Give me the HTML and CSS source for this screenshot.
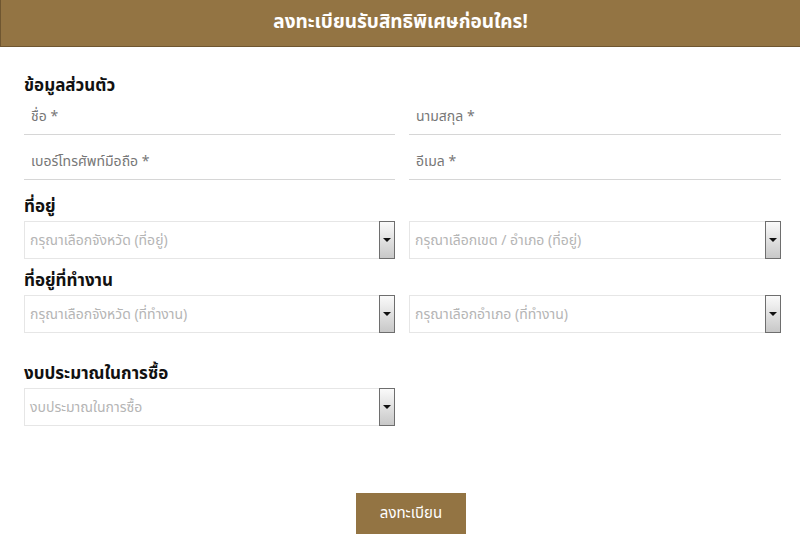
FILE: index.html
```html
<!DOCTYPE html>
<html lang="th">
<head>
<meta charset="utf-8">
<link rel="stylesheet" href="styles.css">
</head>
<body>
<header class="hero">ลงทะเบียนรับสิทธิพิเศษก่อนใคร!</header>
<form class="form">
  <h2 class="title t-personal">ข้อมูลส่วนตัว</h2>
  <div class="grid">
    <div class="field">ชื่อ *</div>
    <div class="field">นามสกุล *</div>
    <div class="field">เบอร์โทรศัพท์มือถือ *</div>
    <div class="field">อีเมล *</div>
  </div>
  <h2 class="title t-addr">ที่อยู่</h2>
  <div class="grid">
    <div class="select"><span class="ph">กรุณาเลือกจังหวัด (ที่อยู่)</span><span class="arrow"></span></div>
    <div class="select"><span class="ph">กรุณาเลือกเขต / อำเภอ (ที่อยู่)</span><span class="arrow"></span></div>
  </div>
  <h2 class="title t-work">ที่อยู่ที่ทำงาน</h2>
  <div class="grid">
    <div class="select"><span class="ph">กรุณาเลือกจังหวัด (ที่ทำงาน)</span><span class="arrow"></span></div>
    <div class="select"><span class="ph">กรุณาเลือกอำเภอ (ที่ทำงาน)</span><span class="arrow"></span></div>
  </div>
  <h2 class="title t-budget">งบประมาณในการซื้อ</h2>
  <div class="grid">
    <div class="select"><span class="ph">งบประมาณในการซื้อ</span><span class="arrow"></span></div>
  </div>
  <div class="actions"><button type="button" class="submit">ลงทะเบียน</button></div>
</form>
</body>
</html>
```
FILE: styles.css
```css
* { box-sizing: border-box; }
body {
  margin: 0;
  background: #fff;
  font-family: "Noto Sans", "Noto Sans Thai", sans-serif;
}
.hero {
  height: 47px;
  background: #937443;
  border-left: 1px solid #6f5630;
  border-bottom: 1px solid #6f5630;
  color: #fff;
  font-weight: 700;
  font-size: 19px;
  display: flex;
  align-items: center;
  justify-content: center;
  padding-bottom: 2px;
}
.form {
  padding: 0 19px 0 24px;
}
.title {
  margin: 0;
  font-size: 17px;
  font-weight: 700;
  color: #111;
  height: 20px;
  line-height: 20px;
}
.t-personal { margin-top: 28px; }
.t-addr { margin-top: 16px; }
.t-work { margin-top: 11px; }
.t-budget { margin-top: 30px; }
.grid {
  display: grid;
  grid-template-columns: 371px 372px;
  column-gap: 14px;
  row-gap: 7px;
}
.field {
  height: 38px;
  border-bottom: 1px solid #d6d6d6;
  color: #777;
  font-size: 14px;
  line-height: 38px;
  padding-left: 7px;
  padding-bottom: 3px;
}
.grid .field:nth-child(-n+2) { margin-top: 2px; }
.select {
  margin-top: 5px;
  height: 38px;
  border: 1px solid #e6e6e6;
  display: flex;
  align-items: center;
  justify-content: space-between;
  padding-left: 5px;
}
.ph {
  color: #b5b5b5;
  font-size: 14px;
}
.arrow {
  width: 16px;
  height: 38px;
  margin: -1px -1px -1px 0;
  border: 1px solid #6e6e6e;
  background: linear-gradient(#fafafa, #c8c8c8);
  position: relative;
}
.arrow::after {
  content: "";
  position: absolute;
  left: 3px;
  top: 16px;
  border-left: 4px solid transparent;
  border-right: 4px solid transparent;
  border-top: 4px solid #111;
}
.actions {
  display: flex;
  justify-content: center;
  margin-top: 67px;
}
.submit {
  width: 110px;
  height: 41px;
  background: #937443;
  border: none;
  color: #fff;
  font-family: inherit;
  font-size: 15px;
  margin-left: 17px;
}
```
